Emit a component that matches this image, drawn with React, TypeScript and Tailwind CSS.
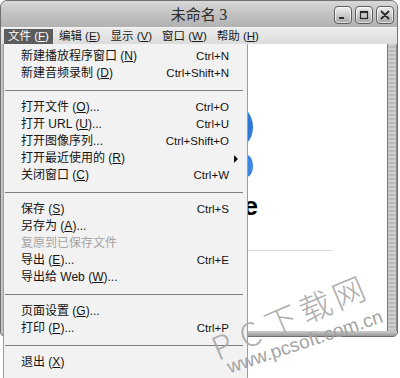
import React from 'react';

type Entry =
  | { t: string; m?: string; dots?: boolean; s?: string; sub?: boolean; disabled?: boolean }
  | 'sep';

const items: Entry[] = [
  { t: '新建播放程序窗口', m: 'N', s: 'Ctrl+N' },
  { t: '新建音频录制', m: 'D', s: 'Ctrl+Shift+N' },
  'sep',
  { t: '打开文件', m: 'O', dots: true, s: 'Ctrl+O' },
  { t: '打开 URL', m: 'U', dots: true, s: 'Ctrl+U' },
  { t: '打开图像序列...', s: 'Ctrl+Shift+O' },
  { t: '打开最近使用的', m: 'R', sub: true },
  { t: '关闭窗口', m: 'C', s: 'Ctrl+W' },
  'sep',
  { t: '保存', m: 'S', s: 'Ctrl+S' },
  { t: '另存为', m: 'A', dots: true },
  { t: '复原到已保存文件', disabled: true },
  { t: '导出', m: 'E', dots: true, s: 'Ctrl+E' },
  { t: '导出给 Web', m: 'W', dots: true },
  'sep',
  { t: '页面设置', m: 'G', dots: true },
  { t: '打印', m: 'P', dots: true, s: 'Ctrl+P' },
  'sep',
  { t: '退出', m: 'X' },
];

const menus = [
  { t: '文件', m: 'F', active: true },
  { t: '编辑', m: 'E' },
  { t: '显示', m: 'V' },
  { t: '窗口', m: 'W' },
  { t: '帮助', m: 'H' },
];

function WinButton({ kind }: { kind: 'min' | 'max' | 'close' }) {
  return (
    <div className="w-[18px] h-[18px] rounded-[4px] border border-[#5e5e5e] bg-gradient-to-b from-[#f0f0f0] to-[#a9a9a9] flex items-center justify-center shadow-[inset_0_0_0_1px_rgba(255,255,255,0.6)]">
      <svg width="12" height="12" viewBox="0 0 12 12">
        {kind === 'min' && <rect x="2" y="8" width="5" height="2" fill="#2a2a2a" />}
        {kind === 'max' && (
          <g>
            <rect x="2.5" y="2.5" width="7" height="7" fill="none" stroke="#2a2a2a" strokeWidth="1.2" />
            <rect x="2.5" y="2.5" width="7" height="1.6" fill="#2a2a2a" />
          </g>
        )}
        {kind === 'close' && (
          <path d="M2.5 2.5 L9.5 9.5 M9.5 2.5 L2.5 9.5" stroke="#2a2a2a" strokeWidth="1.8" strokeLinecap="round" />
        )}
      </svg>
    </div>
  );
}

export default function App() {
  return (
    <div className="relative w-[400px] h-[378px] overflow-hidden bg-white font-['Liberation_Sans','Noto_Sans_CJK_SC',sans-serif] text-[12px] text-[#141414]">
      {/* Window */}
      <div className="w-[398px] h-[337px] flex flex-col rounded-t-[7px] rounded-b-[5px] overflow-hidden border border-[#707070] bg-[#bdbdbd]">
        {/* Title bar */}
        <div className="h-[26px] grid grid-cols-[1fr_auto_1fr] items-center bg-gradient-to-b from-[#d8d8d8] via-[#c2c2c2] to-[#b2b2b2]">
          <div />
          <div className="text-[15px] leading-[26px] text-[#2b2b2b] font-['Noto_Sans_CJK_SC','Liberation_Serif',serif]">
            未命名 <span className="font-['Liberation_Serif',serif] text-[16px]">3</span>
          </div>
          <div className="flex justify-end gap-[3px] pr-[3px]">
            <WinButton kind="min" />
            <WinButton kind="max" />
            <WinButton kind="close" />
          </div>
        </div>
        {/* Menu bar */}
        <div className="h-[17px] flex items-center pl-[3px] gap-[2px] bg-gradient-to-b from-[#ececec] to-[#dcdcdc] border-t border-[#f4f4f4] text-[11.5px]">
          {menus.map((m) => (
            <div
              key={m.t}
              className={
                m.active
                  ? 'h-[15px] px-[4px] flex items-center bg-[#5c5c5c] text-white leading-[15px]'
                  : 'h-[15px] px-[4px] flex items-center text-[#1a1a1a] leading-[15px]'
              }
            >
              {m.t} (<span className="underline underline-offset-[1px]">{m.m}</span>)
            </div>
          ))}
        </div>
        {/* Body */}
        <div className="flex-1 flex">
          <div className="w-[2px] bg-[#c4c4c4]" />
          <div className="flex-1 bg-white flex flex-col items-start border-r border-[#7a7a7a]">
            <svg className="block shrink-0 ml-[197px] mt-[59px]" width="60" height="80" viewBox="0 0 60 80">
              <circle cx="28" cy="24" r="21" fill="none" stroke="#2f79d6" strokeWidth="8" />
              <ellipse cx="47" cy="63" rx="6" ry="11" fill="#3a86e6" />
            </svg>
            <div className="w-[255px] mt-[8px] text-right text-[26px] leading-[30px] font-bold text-black">
              QuickTime
            </div>
            <div className="ml-[150px] mt-[29px] w-[180px] h-px bg-[#dadada]" />
          </div>
          <div className="w-[9px] border-r border-[#8a8a8a] bg-[repeating-linear-gradient(180deg,#cfcfcf_0px,#cfcfcf_2px,#bababa_2px,#bababa_4px)]" />
        </div>
        <div className="h-[5px] bg-gradient-to-b from-[#cdcdcd] to-[#9a9a9a]" />
      </div>

      {/* Dropdown menu */}
      <div className="absolute left-[3px] top-[44px] w-[245px] h-[340px] bg-[#f2f2f2] border-x border-[#9c9c9c] pt-[4px]">
        {items.map((it, i) =>
          it === 'sep' ? (
            <div key={i} className="h-[17px] flex items-center pl-[1px] pr-[4px]">
              <div className="w-full h-px bg-[#7e7e7e]" />
            </div>
          ) : (
            <div
              key={i}
              className={
                it.disabled
                  ? 'h-[17px] flex items-center pl-[17px] pr-[18px] leading-[17px] text-[#a4a4a4]'
                  : 'h-[17px] flex items-center pl-[17px] pr-[18px] leading-[17px]'
              }
            >
              <span className="flex-1 whitespace-nowrap">
                {it.t}
                {it.m && (
                  <>
                    {' '}(<span className="underline underline-offset-[1px]">{it.m}</span>)
                  </>
                )}
                {it.dots && '...'}
              </span>
              {it.s && <span className="text-[11.5px] whitespace-nowrap">{it.s}</span>}
              {it.sub && (
                <span className="mr-[-9px] w-0 h-0 border-y-[4px] border-y-transparent border-l-[4px] border-l-[#111]" />
              )}
            </div>
          )
        )}
      </div>

      {/* Watermark */}
      <div className="pointer-events-none absolute left-[201px] top-[297px] w-[170px] h-[40px] flex items-center rotate-[-23deg] text-[32px] leading-[40px] font-light text-[#adadad] font-['Noto_Sans_CJK_SC',sans-serif]">
        <span className="w-[30px] text-center">P</span>
        <span className="w-[30px] text-center">C</span>
        <span className="w-[38px] text-center">下</span>
        <span className="w-[36px] text-center">载</span>
        <span className="w-[36px] text-center">网</span>
      </div>
      <div className="pointer-events-none absolute left-[210px] top-[331px] w-[190px] h-[22px] text-center rotate-[-18.5deg] text-[19px] leading-[22px] text-[#a2a2a2] font-['Liberation_Sans',sans-serif]">
        www.pcsoft.com.cn
      </div>
    </div>
  );
}
